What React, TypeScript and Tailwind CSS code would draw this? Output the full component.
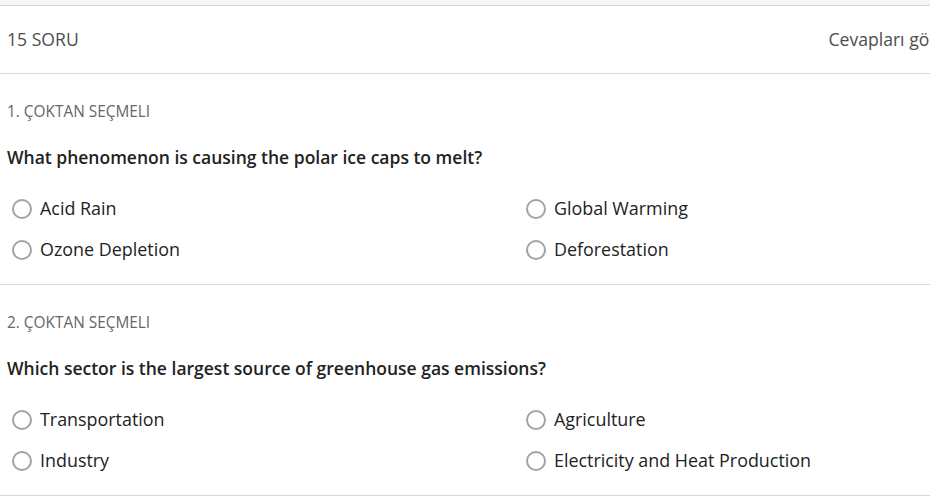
const questions = [
  {
    id: 1,
    question: 'What phenomenon is causing the polar ice caps to melt?',
    options: ['Acid Rain', 'Global Warming', 'Ozone Depletion', 'Deforestation'],
  },
  {
    id: 2,
    question: 'Which sector is the largest source of greenhouse gas emissions?',
    options: ['Transportation', 'Agriculture', 'Industry', 'Electricity and Heat Production'],
  },
];

export default function App() {
  return (
    <main className="w-full overflow-hidden bg-white font-['Open_Sans',sans-serif]">
      <div className="w-[968px]">
        <div className="h-[5px] bg-[#f6f6f6]" />
        <div className="flex h-[68px] items-center justify-between border-t border-[#d6d6d6] px-[7px]">
          <span className="text-[17.6px] text-[#4d4d4d]">15 SORU</span>
          <span className="text-[17.6px] text-[#4d4d4d]">Cevapları göster</span>
        </div>

        {questions.map((q) => (
          <section key={q.id} className="border-t border-[#d6d6d6] px-[7px] pt-[27px] pb-[14px]">
            <p className="text-[15.4px] leading-[22px] text-[#666]">{q.id}. ÇOKTAN SEÇMELI</p>
            <h2 className="mt-[22px] text-[17.5px] font-semibold leading-6 text-[#222]">{q.question}</h2>
            <div className="mt-[19px] grid grid-cols-[514px_1fr]">
              {q.options.map((opt) => (
                <label key={opt} className="flex h-[41px] items-center gap-[8px] pl-[5px]">
                  <span className="h-[20px] w-[20px] rounded-full border-2 border-[#a3a3a3] bg-white" />
                  <span className="text-[17.9px] text-[#222]">{opt}</span>
                </label>
              ))}
            </div>
          </section>
        ))}
        <div className="border-t border-[#d6d6d6] h-[10px]" />
      </div>
    </main>
  );
}
